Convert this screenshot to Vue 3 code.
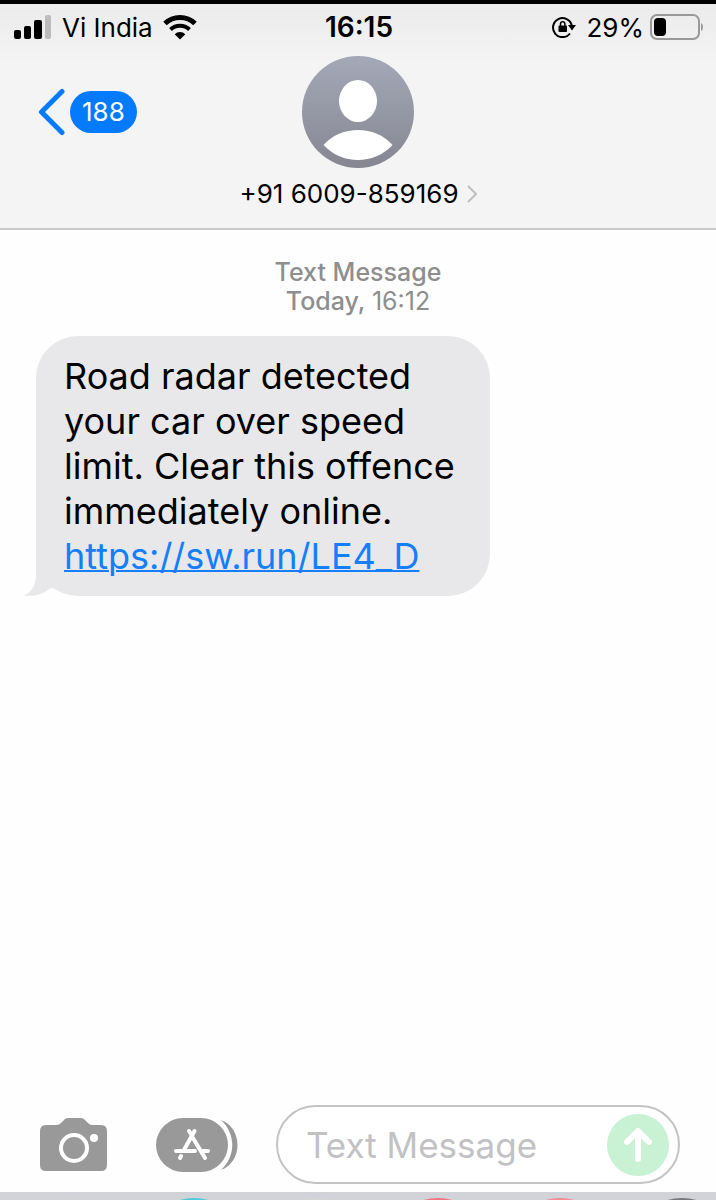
<template>
  <div class="phone">
    <header class="header">
      <div class="status-bar">
        <div class="status-side">
          <svg class="signal" viewBox="0 0 38 24" width="38" height="24">
            <rect x="0" y="15" width="7" height="9" rx="2" />
            <rect x="10" y="11" width="7" height="13" rx="2" />
            <rect x="20" y="5" width="8" height="19" rx="2" />
            <rect x="31" y="0" width="6" height="24" rx="2" fill="#bcbcbc" />
          </svg>
          <span>Vi India</span>
          <svg viewBox="0 0 34 26" width="34" height="26" fill="none" stroke="#000" stroke-width="5">
            <path d="M2 9.500a21.500 21.500 0 0 1 30 0" />
            <path d="M7.500 15.500a13.700 13.700 0 0 1 19 0" stroke-width="4" />
            <path d="M17 25.500l-5.300-5.300a7.500 7.500 0 0 1 10.600 0z" fill="#000" stroke="none" />
          </svg>
        </div>
        <time class="clock">16:15</time>
        <div class="status-side right">
          <svg viewBox="0 0 24 22" width="24" height="22" fill="none" stroke="#000" stroke-width="2">
            <path d="M18 17.500a9.500 9.500 0 1 1 1.800-8" />
            <path d="M16 9h8l-4 5.500z" fill="#000" stroke="none" />
            <rect x="6.500" y="9.500" width="8.500" height="6.500" rx="1" fill="#000" stroke="none" />
            <path d="M8.500 10V8a2.200 2.200 0 0 1 4.400 0v2" stroke-width="1.500" />
          </svg>
          <span class="percent">29%</span>
          <svg viewBox="0 0 54 26" width="54" height="26">
            <rect x="1" y="1" width="48" height="24" rx="6" fill="none" stroke="#999" stroke-width="2" />
            <rect x="4" y="4" width="12" height="18" rx="4" />
            <path d="M51 9q2 1 2 4t-2 4z" fill="#999" />
          </svg>
        </div>
      </div>

      <div class="nav">
        <button class="back" aria-label="Back">
          <svg viewBox="0 0 28 48" width="28" height="48" fill="none" stroke="#047afc" stroke-width="5" stroke-linecap="round" stroke-linejoin="round">
            <path d="M24 3.500L3.500 24 24 44.500" />
          </svg>
          <span class="badge">{{ unread }}</span>
        </button>
        <button class="contact">
          <svg viewBox="0 0 112 112" width="112" height="112">
            <defs>
              <linearGradient id="avatar" x1="0" y1="0" x2="0" y2="1">
                <stop offset="0" stop-color="#a4a9b7" />
                <stop offset="1" stop-color="#868692" />
              </linearGradient>
            </defs>
            <circle cx="56" cy="56" r="56" fill="url(#avatar)" />
            <ellipse cx="56" cy="45" rx="19" ry="21" fill="#fff" />
            <path d="M21.500 89C39 69 73 69 90.500 89 72 109 40 109 21.500 89z" fill="#fff" />
          </svg>
          <span class="number">
            {{ sender }}
            <svg viewBox="0 0 10 18" width="10" height="18" fill="none" stroke="#bfbfc1" stroke-width="2">
              <path d="M1 1l8 8-8 8" />
            </svg>
          </span>
        </button>
        <span></span>
      </div>
    </header>

    <main class="thread">
      <p class="stamp">
        Text Message<br>
        <span>Today,</span> <time>16:12</time>
      </p>
      <div class="bubble">
        Road radar detected your car over speed limit. Clear this offence immediately online.
        <a href="https://sw.run/LE4_D">https://sw.run/LE4_D</a>
        <svg class="tail" viewBox="0 0 40 50" width="40" height="50">
          <path d="M12 0v28C12 39 8 46 0 49.500q15 2 26-7L40 40V0z" fill="#e8e8ea" />
        </svg>
      </div>
    </main>

    <form class="composer" @submit.prevent="send">
      <button type="button" class="tool" aria-label="Camera">
        <svg viewBox="0 0 68 54" width="68" height="54">
          <path d="M6 7h11q2 0 4-2l2-2q2-3 5-3h13q3 0 5 3l2 2q2 2 4 2h9q6 0 6 6v34q0 6-6 6H6q-6 0-6-6V13q0-6 6-6z" fill="#999" />
          <circle cx="34" cy="30" r="13" fill="none" stroke="#fff" stroke-width="4" />
          <circle cx="54" cy="20" r="4" fill="#fff" />
        </svg>
      </button>
      <button type="button" class="tool" aria-label="Apps">
        <svg viewBox="0 0 82 54" width="82" height="54">
          <rect width="72" height="54" rx="27" fill="#999" />
          <path d="M65 2c22 8 22 42 0 50 15-14 15-36 0-50z" fill="#999" />
          <g stroke="#fff" stroke-width="4" stroke-linecap="round">
            <path d="M38.500 13L28 32" />
            <path d="M33 13l2.500 4" />
            <path d="M37 20l12 20" />
            <path d="M20 33h19M47 33h5" />
            <path d="M25 38l-1 2" />
          </g>
        </svg>
      </button>
      <div class="field">
        <input v-model="draft" type="text" placeholder="Text Message" aria-label="Text Message">
        <button type="submit" class="send" aria-label="Send">
          <svg viewBox="0 0 28 36" width="28" height="36" fill="none" stroke="#fff" stroke-width="6" stroke-linecap="round" stroke-linejoin="round">
            <path d="M14 32V4M3 15L14 4l11 11" />
          </svg>
        </button>
      </div>
    </form>

    <div class="app-strip">
      <i v-for="(color, i) in apps" :key="i" :style="{ background: color }"></i>
    </div>
  </div>
</template>

<script setup>
import { ref } from 'vue'

const unread = 188
const sender = '+91 6009-859169'
const draft = ref('')
const apps = ['#d0d3d4', '#4ccbdc', '#d3d6d2', '#f27384', '#f28a98', '#77787d']

function send() {
  draft.value = ''
}
</script>

<style>
body { margin: 0; background: #fff; }
</style>

<style scoped>
.phone {
  min-height: 100vh; display: flex; flex-direction: column; box-sizing: border-box;
  border-top: 4px solid #000; overflow: hidden; background: #fefefe; color: #000;
  font-family: Inter, "Liberation Sans", sans-serif;
}
button { border: none; background: none; padding: 0; color: inherit; font: inherit; cursor: pointer; }
svg { display: block; flex-shrink: 0; }

.header { background: linear-gradient(#ebebeb, #f4f4f4 60px); border-bottom: 2px solid #c8c8ca; }
.status-bar {
  display: grid; grid-template-columns: 1fr auto 1fr; align-items: center;
  height: 46px; padding: 0 12px 0 14px; font-size: 26px;
}
.status-side { display: flex; align-items: center; gap: 10px; }
.status-side.right { justify-content: flex-end; }
.percent { margin-right: -4px; }
.clock { font-size: 28px; font-weight: 600; }

.nav {
  display: grid; grid-template-columns: 1fr auto 1fr; align-items: start;
  padding: 6px 38px 16px;
}
.back { display: flex; align-items: center; gap: 4px; margin-top: 32px; }
.badge {
  background: #047afc; color: #fff; border-radius: 21px; padding: 0 12px;
  font-size: 26px; line-height: 42px;
}
.contact { display: flex; flex-direction: column; align-items: center; gap: 8px; }
.number { display: flex; align-items: center; gap: 8px; font-size: 26px; line-height: 36px; }

.thread { flex: 1; padding: 28px 36px; }
.stamp { margin: 0 0 20px; text-align: center; font-size: 25px; line-height: 29px; color: #8e8e8e; }
.stamp, .stamp span { font-weight: 500; }
.stamp time { font-weight: 400; }
.bubble {
  position: relative; box-sizing: border-box; width: fit-content; max-width: 454px;
  padding: 18px 28px 17px; border-radius: 42px; background: #e8e8ea;
  font-size: 36px; line-height: 45px;
}
.bubble a { display: block; color: #147efb; text-decoration-thickness: 2px; }
.tail { position: absolute; left: -12px; bottom: 0; }

.composer { display: flex; align-items: center; padding: 0 36px 8px 40px; }
.tool { margin-right: 48px; }
.tool + .tool { margin-right: 38px; }
.field {
  flex: 1; min-width: 0; box-sizing: border-box; height: 79px; display: flex; align-items: center;
  padding: 0 9px 0 28px; border: 2px solid #c4c4c6; border-radius: 40px; background: #fff;
}
.field input {
  flex: 1; min-width: 0; border: none; outline: none; background: none; padding: 0;
  font: inherit; font-size: 35px; color: #000;
}
.field input::placeholder { color: #c2c2c4; opacity: 1; }
.send {
  width: 62px; height: 62px; border-radius: 50%; background: #c9f1d3;
  display: flex; align-items: center; justify-content: center;
}

.app-strip {
  height: 8px; overflow: hidden; display: flex; gap: 42px;
  padding: 0 0 0 32px; background: #d1d3d9;
}
.app-strip i { flex: none; width: 80px; height: 60px; margin-top: 6px; border-radius: 50%; }
</style>
